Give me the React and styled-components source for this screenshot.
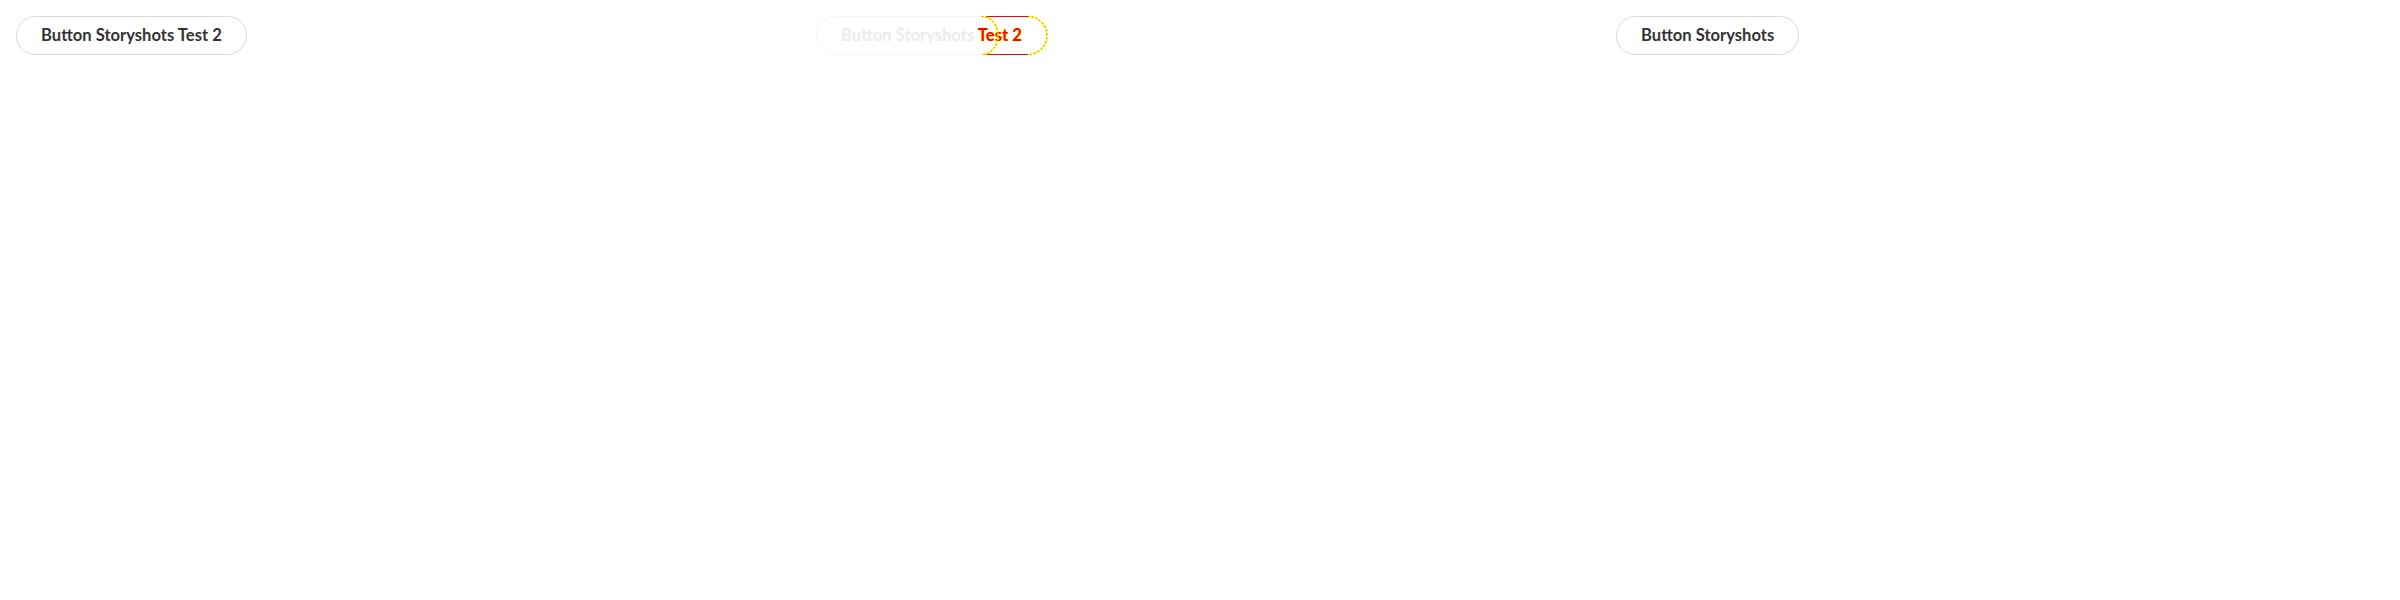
import React from "react";
import styled, { createGlobalStyle } from "styled-components";

const GlobalStyle = createGlobalStyle`
  html, body {
    margin: 0;
    padding: 0;
    background: #ffffff;
  }
`;

const Page = styled.div`
  display: grid;
  grid-template-columns: repeat(3, 800px);
  width: 2400px;
  height: 600px;
  background: #ffffff;
`;

const Panel = styled.div`
  padding: 16px;
  display: flex;
  align-items: flex-start;
`;

const Button = styled.button`
  box-sizing: border-box;
  height: 39px;
  padding: 0 24px;
  border: 1px solid ${({ faded }) => (faded ? "#f6f6f6" : "#d9d9d9")};
  border-radius: 20px;
  background: #ffffff;
  color: ${({ faded }) => (faded ? "#ebebeb" : "#333333")};
  font-family: "Lato", "Noto Sans", sans-serif;
  font-weight: 700;
  font-size: 16.6px;
  line-height: 1;
  white-space: nowrap;
`;

const DiffWrap = styled.div`
  position: relative;
  display: inline-flex;
`;

const DiffOutline = styled.svg`
  position: absolute;
  left: 0;
  top: 0;
  overflow: visible;
  pointer-events: none;
`;

const DiffText = styled.span`
  color: #ff0000;
  text-shadow: 0 0 1px #ffff00, 0 0 1px #ffff00;
`;

const DiffButton = () => (
  <DiffWrap>
    <Button faded>
      Button Storyshots <DiffText>Test 2</DiffText>
    </Button>
    <DiffOutline width="232" height="39" viewBox="0 0 232 39">
      <line x1="166" y1="0.5" x2="212" y2="0.5" stroke="#ff0000" />
      <line x1="166" y1="38.5" x2="212" y2="38.5" stroke="#ff0000" />
      <path d="M166 0.5 A16 19 0 0 1 166 38.5" fill="none" stroke="#ffff00" strokeWidth="1.5" />
      <path d="M166 0.5 A16 19 0 0 1 166 38.5" fill="none" stroke="#ff0000" strokeWidth="1" strokeDasharray="1 3" />
      <path d="M212 0.5 A19 19 0 0 1 212 38.5" fill="none" stroke="#ffff00" strokeWidth="1.5" />
      <path d="M212 0.5 A19 19 0 0 1 212 38.5" fill="none" stroke="#ff0000" strokeWidth="1" strokeDasharray="1 3" />
    </DiffOutline>
  </DiffWrap>
);

export default function App() {
  return (
    <>
      <GlobalStyle />
      <Page>
        <Panel>
          <Button>Button Storyshots Test 2</Button>
        </Panel>
        <Panel>
          <DiffButton />
        </Panel>
        <Panel>
          <Button>Button Storyshots</Button>
        </Panel>
      </Page>
    </>
  );
}
